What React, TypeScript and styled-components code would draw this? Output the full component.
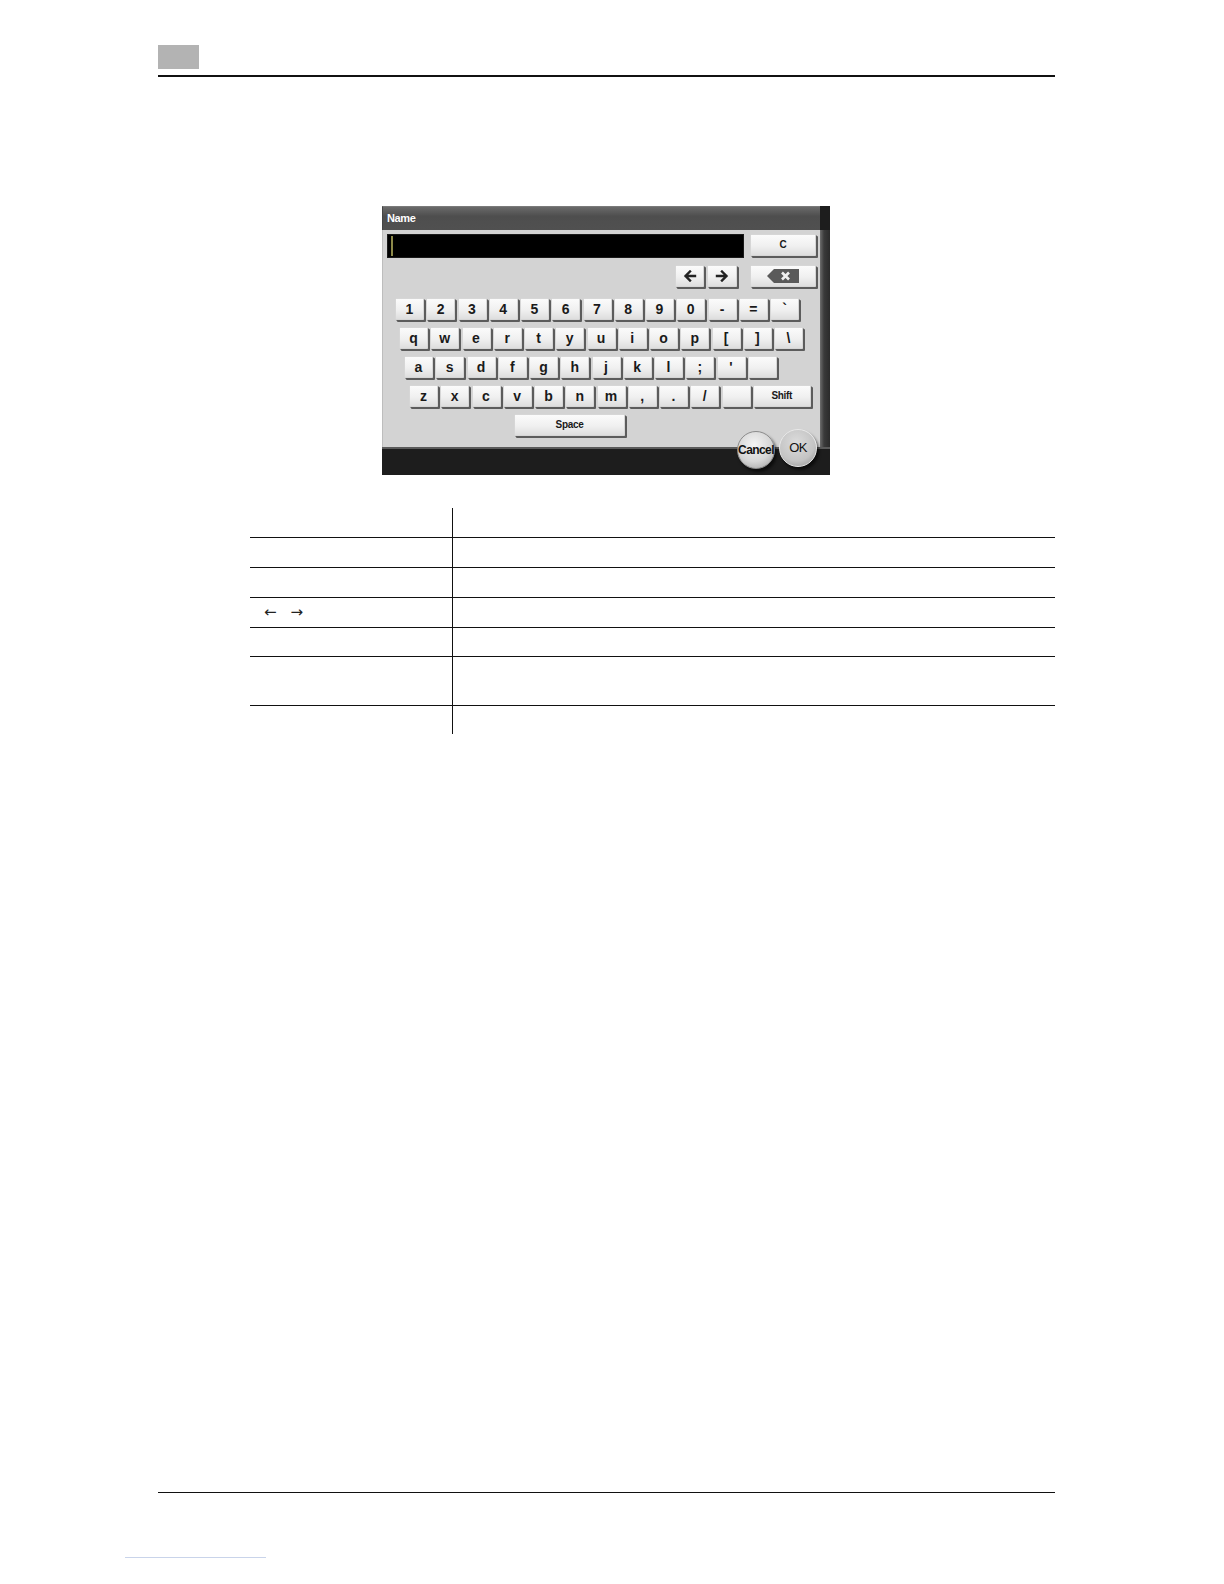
import { Fragment } from 'react';
import styled, { createGlobalStyle } from 'styled-components';

const Global = createGlobalStyle`
  html, body {
    margin: 0;
    padding: 0;
    background: #ffffff;
    overflow: hidden;
  }
  body {
    font-family: "Liberation Sans", Arial, sans-serif;
  }
`;

const Page = styled.div`
  width: 1224px;
  height: 1584px;
  display: flow-root;
  overflow: hidden;
`;

const Header = styled.div`
  margin: 45px 0 0 158px;
  width: 897px;
  display: flex;
  flex-direction: column;
`;

const ChapterTab = styled.div`
  width: 41px;
  height: 24px;
  background: #b3b3b3;
`;

const Rule = styled.div<{ $top?: number }>`
  margin-top: ${(p) => p.$top ?? 0}px;
  height: 1.5px;
  background: #111;
`;

const Figure = styled.div`
  margin: 129px 0 0 382px;
  width: 448px;
  height: 269px;
  position: relative;
  display: flex;
  flex-direction: column;
  background: #1d1d1d;
`;

const TitleBar = styled.div`
  height: 24px;
  flex: none;
  margin-right: 10px;
  background: linear-gradient(#6a6a6a, #4e4e4e 40%, #505050);
  border-top: 1px solid #7a7a7a;
  border-left: 1px solid #444;
  color: #fff;
  font-size: 11px;
  font-weight: bold;
  letter-spacing: -0.4px;
  display: flex;
  align-items: center;
  padding-left: 4px;
  box-sizing: border-box;
`;

const BodyWrap = styled.div`
  display: flex;
  height: 217px;
  flex: none;
`;

const Body = styled.div`
  flex: 1;
  background: #d3d3d3;
  border-left: 1px solid #bdbdbd;
  padding: 4px 4px 0 4px;
  display: flex;
  flex-direction: column;
  box-sizing: border-box;
`;

const RightEdge = styled.div`
  width: 10px;
  background: linear-gradient(90deg, #6d6d6d, #3a3a3a 40%, #2a2a2a);
`;

const BottomBar = styled.div`
  flex: 1;
  background: #1d1d1d;
  border-top: 2px solid #5a5a5a;
`;

const TopRow = styled.div`
  display: flex;
  align-items: flex-start;
  gap: 6px;
`;

const InputField = styled.div`
  width: 357px;
  height: 24px;
  background: #000;
  position: relative;
  box-shadow: inset 0 0 0 1px #1a1a1a;
`;

const Caret = styled.div`
  position: absolute;
  left: 4px;
  top: 2px;
  width: 1.5px;
  height: 20px;
  background: #8d8a4a;
`;

const Key = styled.div<{ $w?: number; $small?: boolean }>`
  width: ${(p) => p.$w ?? 29}px;
  height: 22px;
  flex: none;
  box-sizing: border-box;
  background: linear-gradient(#fbfbfb, #f0f0f0 55%, #dedede);
  border: 1px solid #d6d6d6;
  border-radius: 1px;
  box-shadow: 2px 2px 0 #5c5c5c, 1px 1px 0 #8a8a8a;
  display: flex;
  align-items: center;
  justify-content: center;
  color: #1a1a1a;
  font-weight: bold;
  font-size: ${(p) => (p.$small ? 10 : 14)}px;
  letter-spacing: ${(p) => (p.$small ? -0.3 : 0)}px;
  line-height: 1;
`;

const ControlRow = styled.div`
  margin-top: 7px;
  display: flex;
  justify-content: flex-end;
  gap: 3px;
`;

const Spacer = styled.div`
  width: 7px;
`;

const KeyRow = styled.div<{ $indent: number; $top: number }>`
  margin-top: ${(p) => p.$top}px;
  padding-left: ${(p) => p.$indent}px;
  display: flex;
  gap: 2.25px;
`;

const RoundButton = styled.div<{ $x: number; $y: number }>`
  position: absolute;
  left: ${(p) => p.$x}px;
  top: ${(p) => p.$y}px;
  width: 38px;
  height: 38px;
  border-radius: 50%;
  box-sizing: border-box;
  background: radial-gradient(circle at 45% 35%, #f4f4f4, #d6d6d6 55%, #9a9a9a);
  border: 1.5px solid #8c8c8c;
  box-shadow: 2px 3px 3px rgba(0, 0, 0, 0.6);
  display: flex;
  align-items: center;
  justify-content: center;
  color: #111;
  font-size: 12px;
  font-weight: bold;
  letter-spacing: -0.6px;
  white-space: nowrap;
`;

const OkButton = styled(RoundButton)`
  background: radial-gradient(circle at 45% 35%, #dcdcdc, #c4c4c4 60%, #8a8a8a);
  border: 1.5px solid #e8e8e8;
  font-size: 13px;
  font-weight: normal;
`;

const Table = styled.div`
  margin: 33px 0 0 250px;
  width: 805px;
  display: grid;
  grid-template-columns: 202px 1fr;
`;

const Cell = styled.div<{ $h: number; $line?: boolean; $right?: boolean }>`
  height: ${(p) => p.$h}px;
  border-top: ${(p) => (p.$line ? '1.5px solid #111' : 'none')};
  border-left: ${(p) => (p.$right ? '1.5px solid #111' : 'none')};
  box-sizing: border-box;
  display: flex;
  align-items: center;
  padding-left: 14px;
  font-family: "DejaVu Sans", sans-serif;
  font-size: 15px;
  color: #222;
  gap: 14px;
`;

const Footer = styled.div`
  margin: 0 0 0 158px;
  width: 897px;
`;

const LinkLine = styled.div`
  margin: 64px 0 0 125px;
  width: 141px;
  height: 1px;
  background: #c9d4ea;
`;

const ArrowIcon = ({ dir }: { dir: 'left' | 'right' }) => (
  <svg width="14" height="12" viewBox="0 0 14 12">
    <path
      d={dir === 'left' ? 'M12 6H3M7 1.5L2.5 6L7 10.5' : 'M2 6h9M7 1.5L11.5 6L7 10.5'}
      stroke="#222"
      strokeWidth="2.4"
      fill="none"
      strokeLinecap="square"
    />
  </svg>
);

const BackspaceIcon = () => (
  <svg width="32" height="14" viewBox="0 0 32 14">
    <path d="M7 0H32V14H7L0 7Z" fill="#5a5a5a" />
    <path d="M15 3.5L22 10.5M22 3.5L15 10.5" stroke="#f0f0f0" strokeWidth="2.6" />
  </svg>
);

const rows: { keys: string[]; indent: number; top: number }[] = [
  { keys: ['1', '2', '3', '4', '5', '6', '7', '8', '9', '0', '-', '=', '`'], indent: 8, top: 11 },
  { keys: ['q', 'w', 'e', 'r', 't', 'y', 'u', 'i', 'o', 'p', '[', ']', '\\'], indent: 12, top: 7 },
  { keys: ['a', 's', 'd', 'f', 'g', 'h', 'j', 'k', 'l', ';', "'", ''], indent: 17, top: 7 },
];

const bottomKeys = ['z', 'x', 'c', 'v', 'b', 'n', 'm', ',', '.', '/', ''];

const tableRows = [29, 30, 30, 30, 29, 49, 29];

export default function App() {
  return (
    <>
      <Global />
      <Page>
        <Header>
          <ChapterTab />
          <Rule $top={6} />
        </Header>

        <Figure>
          <TitleBar>Name</TitleBar>
          <BodyWrap>
            <Body>
              <TopRow>
                <InputField>
                  <Caret />
                </InputField>
                <Key $w={66} $small>
                  C
                </Key>
              </TopRow>
              <ControlRow>
                <Key $w={29}>
                  <ArrowIcon dir="left" />
                </Key>
                <Key $w={30}>
                  <ArrowIcon dir="right" />
                </Key>
                <Spacer />
                <Key $w={66}>
                  <BackspaceIcon />
                </Key>
              </ControlRow>
              {rows.map((r, i) => (
                <KeyRow key={i} $indent={r.indent} $top={r.top}>
                  {r.keys.map((k, j) => (
                    <Key key={j}>{k}</Key>
                  ))}
                </KeyRow>
              ))}
              <KeyRow $indent={22} $top={7}>
                {bottomKeys.map((k, j) => (
                  <Key key={j}>{k}</Key>
                ))}
                <Key $w={58} $small>
                  Shift
                </Key>
              </KeyRow>
              <KeyRow $indent={127} $top={7}>
                <Key $w={111} $small>
                  Space
                </Key>
              </KeyRow>
            </Body>
            <RightEdge />
          </BodyWrap>
          <BottomBar />
          <RoundButton $x={355} $y={225}>
            Cancel
          </RoundButton>
          <OkButton $x={397} $y={223}>
            OK
          </OkButton>
        </Figure>

        <Table>
          {tableRows.map((h, i) => (
            <Fragment key={i}>
              <Cell $h={h} $line={i > 0}>
                {i === 3 && (
                  <>
                    <span>←</span>
                    <span>→</span>
                  </>
                )}
              </Cell>
              <Cell $h={h} $line={i > 0} $right />
            </Fragment>
          ))}
        </Table>

        <Footer>
          <Rule $top={758} />
        </Footer>
        <LinkLine />
      </Page>
    </>
  );
}
